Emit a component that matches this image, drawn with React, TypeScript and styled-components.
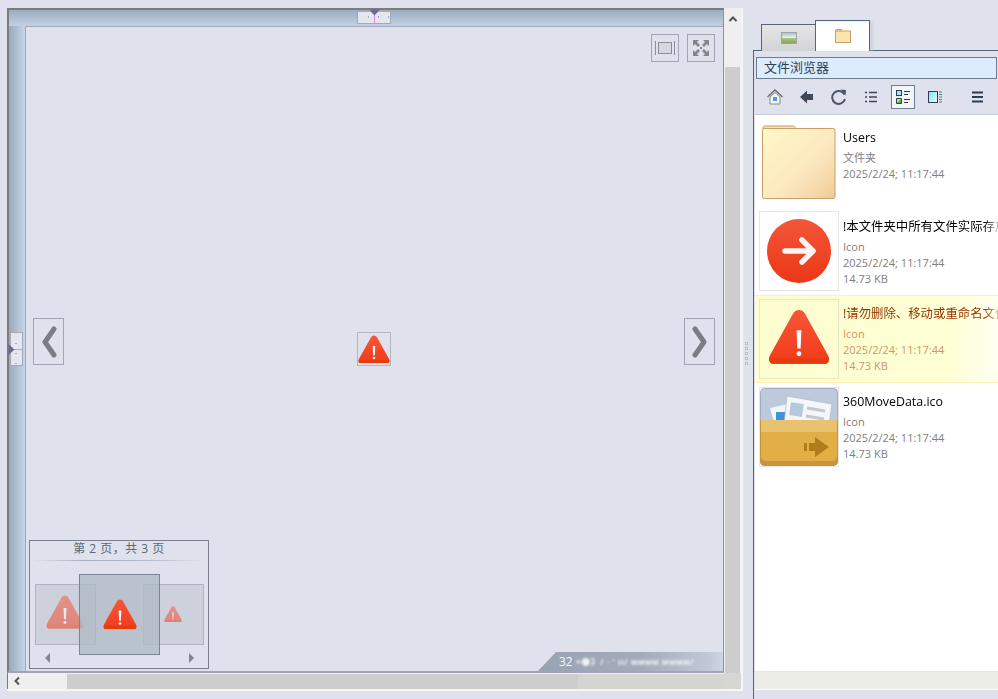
import * as React from 'react';
import styled, { createGlobalStyle } from 'styled-components';

const GlobalStyle = createGlobalStyle`
  html, body {
    margin: 0;
    padding: 0;
    height: 100%;
    background: #dfe2ec;
    overflow: hidden;
  }
  body {
    font-family: "Open Sans", "Noto Sans CJK SC", sans-serif;
    font-size: 12px;
  }
`;

const Page = styled.div`
  width: 998px;
  height: 699px;
  display: flex;
  padding: 8px 0 0 7px;
  box-sizing: border-box;
  overflow: hidden;
`;

const ViewerWindow = styled.div`
  width: 736px;
  height: 683px;
  display: grid;
  grid-template-columns: 1fr 17px;
  grid-template-rows: 1fr 16px;
  flex: none;
  border-right: 2px solid #f6f6f8;
  border-bottom: 2px solid #f6f6f8;
  box-sizing: border-box;
`;

const ViewerFrame = styled.div`
  position: relative;
  border-top: 2px solid #7c7c7c;
  border-left: 2px solid #7c7c7c;
  border-right: 1px solid #8a90a2;
  border-bottom: 2px solid #a0a4b4;
  padding: 16px 0 0 16px;
  background: linear-gradient(180deg, #9dabbf, #c2d0e2 16px, transparent 16px),
    linear-gradient(90deg, #9aa9bd, #c6d6e8 16px, transparent 16px);
`;

const Canvas = styled.div`
  position: relative;
  height: 100%;
  box-sizing: border-box;
  border-top: 1px solid #a2a6ba;
  border-left: 1px solid #a2a6ba;
  background: #dfe2ec;
`;

const Splitter = styled.div<{ $vertical?: boolean }>`
  position: absolute;
  z-index: 1;
  background: #e4e8ee;
  border: 1px solid #a4a9b8;
  box-sizing: border-box;
  ${p =>
    p.$vertical
      ? 'left: 1px; top: 322px; width: 13px; height: 34px;'
      : 'left: 348px; top: 1px; width: 34px; height: 13px;'}
`;

const SplitterMark = styled.svg`
  position: absolute;
  left: 0;
  top: 0;
  overflow: visible;
`;

const CornerButton = styled.div<{ $right: number }>`
  position: absolute;
  top: 7px;
  right: ${p => p.$right}px;
  width: 28px;
  height: 28px;
  box-sizing: border-box;
  border: 1px solid #a0a4b4;
  display: flex;
  align-items: center;
  justify-content: center;
`;

const NavButton = styled.div<{ $side: 'left' | 'right' }>`
  position: absolute;
  top: 291px;
  ${p => (p.$side === 'left' ? 'left: 7px;' : 'right: 8px;')}
  width: 31px;
  height: 47px;
  box-sizing: border-box;
  border: 1px solid #a0a4b4;
  display: flex;
  align-items: center;
  justify-content: center;
`;

const CenterImage = styled.div`
  position: absolute;
  left: 331px;
  top: 305px;
  width: 32px;
  height: 32px;
  border: 1px solid #b2b5c2;
  display: flex;
  align-items: center;
  justify-content: center;
`;

const Navigator = styled.div`
  position: absolute;
  left: 3px;
  bottom: 2px;
  width: 178px;
  height: 127px;
  border: 1px solid #78808e;
`;

const NavTitle = styled.div`
  height: 20px;
  box-sizing: border-box;
  margin: 0 4px;
  text-align: center;
  line-height: 16px;
  font-size: 12px;
  letter-spacing: 0.5px;
  color: #5a6878;
  border-bottom: 1px solid;
  border-image: linear-gradient(90deg, transparent, #a9adbd 30%, #b8bccb 70%, transparent) 1;
`;

const NavStage = styled.div`
  position: relative;
  height: 107px;
`;

const SidePage = styled.div<{ $side: 'left' | 'right' }>`
  position: absolute;
  top: 23px;
  ${p => (p.$side === 'left' ? 'left: 5px;' : 'right: 4px;')}
  width: 61px;
  height: 61px;
  background: #cdd1dc;
  border: 1px solid #afb4c2;
  box-sizing: border-box;
`;

const SideIcon = styled.div<{ $x: number; $y: number }>`
  position: absolute;
  left: ${p => p.$x}px;
  top: ${p => p.$y}px;
  opacity: 0.5;
  line-height: 0;
`;

const CurrentPage = styled.div`
  position: absolute;
  left: 49px;
  top: 13px;
  width: 81px;
  height: 81px;
  background: rgba(176, 184, 197, 0.78);
  border: 1px solid #7c8594;
  box-sizing: border-box;
  display: flex;
  align-items: center;
  justify-content: center;
`;

const NavArrow = styled.div<{ $side: 'left' | 'right' }>`
  position: absolute;
  top: 92px;
  ${p =>
    p.$side === 'left'
      ? 'left: 15px; border-right: 5px solid #7a8798;'
      : 'right: 14px; border-left: 5px solid #7a8798;'}
  border-top: 5px solid transparent;
  border-bottom: 5px solid transparent;
`;

const PageBadge = styled.div`
  position: absolute;
  right: 0;
  bottom: 0;
  width: 185px;
  height: 19px;
  background: linear-gradient(90deg, #9aa3b3, #a3abbb 55%, #c0c7d6 92%, #cfd5e2);
  clip-path: polygon(18px 0, 100% 0, 100% 100%, 0 100%);
  color: #f4f6fa;
  display: flex;
  align-items: center;
  padding-left: 21px;
  box-sizing: border-box;
  gap: 3px;
  font-size: 12px;
`;

const BlurredText = styled.span`
  filter: blur(0.8px);
  color: #f0f2f7;
  font-size: 9px;
  font-weight: 700;
  white-space: nowrap;
  letter-spacing: 0.4px;
`;

const VScroll = styled.div`
  background: #efefef;
  display: flex;
  flex-direction: column;
  align-items: center;
`;

const HScroll = styled.div`
  background: #efefef;
  display: flex;
  align-items: center;
  border-left: 1px solid #7c7c7c;
  padding-left: 1px;
`;

const ScrollBtn = styled.div<{ $top?: number }>`
  width: 16px;
  height: 16px;
  margin-top: ${p => p.$top ?? 0}px;
  flex: none;
  display: flex;
  align-items: center;
  justify-content: center;
`;

const VThumb = styled.div`
  width: 15px;
  margin-top: 40px;
  flex: 1;
  background: #cdcdcd;
`;

const HThumb = styled.div`
  margin-left: 42px;
  height: 15px;
  flex: 1;
  background: linear-gradient(90deg, #cdcdcd 77.8%, #d4d4d0 77.8%);
`;

const Corner = styled.div`
  background: #d6d6d2;
`;

const Side = styled.div`
  margin-left: 10px;
  flex: 1;
  display: flex;
  flex-direction: column;
  min-width: 0;
  margin-top: 12px;
`;

const TabRow = styled.div`
  height: 31px;
  display: flex;
  align-items: flex-end;
  padding-left: 8px;
  position: relative;
  z-index: 1;
  margin-bottom: -1px;
`;

const Tab = styled.div<{ $active?: boolean }>`
  width: ${p => (p.$active ? 55 : 54)}px;
  height: ${p => (p.$active ? 31 : 27)}px;
  box-sizing: border-box;
  border: 1px solid #566479;
  border-bottom: none;
  display: flex;
  align-items: center;
  justify-content: center;
  ${p =>
    p.$active
      ? 'background: linear-gradient(180deg, #e6f6fd, #fff 3px); box-shadow: 4px 0 3px -1px #cfd2dc;'
      : 'background: linear-gradient(180deg, #e6e6e8, #d2d3d6); border-right: none;'}
`;

const Panel = styled.div`
  flex: 1;
  display: flex;
  flex-direction: column;
  border-top: 1px solid #566479;
  border-left: 1px solid #566479;
  padding: 6px 1px 0 2px;
  min-height: 0;
`;

const TitleBar = styled.div`
  height: 22px;
  box-sizing: border-box;
  background: #dcecfd;
  border: 1px solid #6d7d90;
  color: #2e4258;
  font-size: 13px;
  line-height: 19px;
  padding-left: 7px;
`;

const Toolbar = styled.div`
  height: 35px;
  display: flex;
  align-items: center;
  padding-left: 7px;
`;

const ToolButton = styled.div<{ $active?: boolean; $gap?: number }>`
  width: 24px;
  height: 24px;
  margin-right: ${p => p.$gap ?? 8}px;
  flex: none;
  display: flex;
  align-items: center;
  justify-content: center;
  box-sizing: border-box;
  ${p => p.$active && 'background: #f4f5f8; border: 1px solid #6d7d90;'}
`;

const FileList = styled.div`
  height: 558px;
  flex: none;
  box-sizing: border-box;
  background: #fff;
  border-top: 1px solid #c8cbd8;
  border-bottom: 1px solid #e6e6e8;
  margin: 0 -1px 0 -1px;
  padding-top: 7px;
  overflow: hidden;
`;

const StatusStrip = styled.div`
  height: 17px;
  flex: none;
  margin: 0 -1px;
  background: #edede7;
  border-bottom: 1px solid #fbfbfb;
`;

const Item = styled.div<{ $selected?: boolean; $height: number; $pad: number }>`
  height: ${p => p.$height}px;
  display: flex;
  box-sizing: border-box;
  padding: ${p => p.$pad}px 0 0 4px;
  ${p =>
    p.$selected &&
    'background: linear-gradient(90deg, #fdfdcf, #feffd4 80%, #fffff0); border-top: 1px solid #fdf0bb; border-bottom: 1px solid #fdf0bb;'}
`;

const Thumb = styled.div<{ $bare?: boolean; $selected?: boolean }>`
  width: 80px;
  height: 80px;
  flex: none;
  box-sizing: border-box;
  border: 1px solid ${p => (p.$bare ? 'transparent' : p.$selected ? '#e8e8c0' : '#e6e6e6')};
  padding-bottom: ${p => (p.$selected ? 4 : 0)}px;
  display: flex;
  align-items: center;
  justify-content: center;
`;

const Meta = styled.div<{ $top: number }>`
  margin-left: 4px;
  min-width: 0;
  flex: 1;
  overflow: hidden;
  padding-top: ${p => p.$top}px;
`;

const Name = styled.div<{ $selected?: boolean }>`
  height: 20px;
  line-height: 16px;
  white-space: nowrap;
  color: ${p => (p.$selected ? '#993300' : '#000')};
  font-size: 12.4px;
  mask-image: linear-gradient(90deg, #000 calc(100% - 14px), rgba(0, 0, 0, 0.3));
`;

const Line = styled.div<{ $selected?: boolean }>`
  height: 16px;
  line-height: 16px;
  white-space: nowrap;
  color: ${p => (p.$selected ? '#d4946a' : '#808080')};
  font-size: 11px;
`;

const Grip = styled.div`
  position: absolute;
  left: 745px;
  top: 342px;
  display: flex;
  flex-direction: column;
  gap: 2px;
`;

const GripDot = styled.span`
  width: 3px;
  height: 3px;
  background: #f0f1f5;
  border: 1px solid #bcc0cc;
  box-sizing: border-box;
`;

const Warning = ({ size, id }: { size: number; id: string }) => (
  <svg width={size} height={size * 0.9} viewBox="0 0 64 58" style={{ display: 'block' }}>
    <defs>
      <linearGradient id={id} x1="0" y1="0" x2="0" y2="1">
        <stop offset="0" stopColor="#f8553a" />
        <stop offset="1" stopColor="#f03c18" />
      </linearGradient>
    </defs>
    <path
      d="M32 1c2.800 0 4.800 1.500 6.300 4l24.100 43.500c1.800 3.300.3 8.500-3.500 8.500H5.100c-3.800 0-5.300-5.200-3.500-8.500L25.700 5C27.200 2.500 29.200 1 32 1z"
      fill={`url(#${id})`}
    />
    <path d="M1.200 51h61.600c1 3-.9 6-3.900 6H5.100C2.100 57 .2 54 1.200 51z" fill="#e8390f" />
    <path d="M29.500 22h5l-.8 19h-3.400z" fill="#fff" />
    <circle cx="32" cy="46.500" r="2.500" fill="#fff" />
  </svg>
);

const FolderLarge = () => (
  <svg width="74" height="74" viewBox="0 0 74 74">
    <defs>
      <linearGradient id="folderFill" x1="0" y1="0" x2="1" y2="1">
        <stop offset="0" stopColor="#fff9c8" />
        <stop offset="0.6" stopColor="#fbe7bf" />
        <stop offset="1" stopColor="#efcb96" />
      </linearGradient>
    </defs>
    <path d="M1 4V2.500C1 1.500 1.500 1 2.500 1h29C33 1 33.500 2 33.500 4z" fill="#f5e3b4" stroke="#c89d68" />
    <rect x="0.500" y="3.500" width="72.500" height="70" rx="2" fill="url(#folderFill)" stroke="#c89d68" />
  </svg>
);

const ArrowIcon = () => (
  <svg width="64" height="64" viewBox="0 0 64 64">
    <defs>
      <linearGradient id="arrowFill" x1="0" y1="0" x2="0" y2="1">
        <stop offset="0" stopColor="#f4563a" />
        <stop offset="1" stopColor="#ea3716" />
      </linearGradient>
    </defs>
    <circle cx="32" cy="32" r="32" fill="url(#arrowFill)" />
    <path d="M18 32h28M35 21l11 11-11 11" fill="none" stroke="#fff4f0" strokeWidth="5.500" strokeLinecap="round" strokeLinejoin="round" />
  </svg>
);

const MoveDataIcon = () => (
  <svg width="78" height="78" viewBox="0 0 78 78">
    <rect x="0.500" y="0.500" width="77" height="77" rx="4" fill="#bccadb" stroke="#9fadbf" />
    <path d="M10 20l18-4 6 18H14z" fill="#f2f5f9" />
    <rect x="16" y="24" width="11" height="12" fill="#3d93dc" />
    <path d="M27 8l45 8-3 20H24z" fill="#f4f6f9" stroke="#aab6c6" strokeWidth="0.700" />
    <rect x="30" y="15" width="13" height="13" fill="#b6c8dc" transform="rotate(8 36 21)" />
    <path d="M47 20l18 3M46 28l18 3" stroke="#c0c8d2" strokeWidth="3" />
    <path d="M0 32h78v41a5 5 0 0 1-5 5H5a5 5 0 0 1-5-5z" fill="#c9953c" />
    <path d="M1 32h76v36a5 5 0 0 1-5 5H6a5 5 0 0 1-5-5z" fill="#e2ae46" />
    <rect x="1" y="32" width="76" height="12" fill="#e8c26f" />
    <path d="M44 55h3v8h-3zM49 55h6v-6l14 10-14 10v-6h-6z" fill="#b07d1c" />
  </svg>
);

const ImageTabIcon = () => (
  <svg width="16" height="12" viewBox="0 0 16 12">
    <defs>
      <linearGradient id="tabSky" x1="0" y1="0" x2="0" y2="1">
        <stop offset="0" stopColor="#b6bfc8" />
        <stop offset="1" stopColor="#eef2ee" />
      </linearGradient>
      <linearGradient id="tabGrass" x1="0" y1="0" x2="0" y2="1">
        <stop offset="0" stopColor="#adc688" />
        <stop offset="1" stopColor="#86a65a" />
      </linearGradient>
    </defs>
    <rect x="0.500" y="0.500" width="15" height="11" fill="#eef2f0" stroke="#9aa3a6" />
    <rect x="1" y="1" width="14" height="5" fill="url(#tabSky)" />
    <rect x="1" y="6" width="14" height="5" fill="url(#tabGrass)" />
  </svg>
);

const FolderTabIcon = () => (
  <svg width="16" height="14" viewBox="0 0 16 14">
    <path d="M.5 2.500V1.500c0-.5.300-1 1-1h5l1 2z" fill="#f3dfae" stroke="#c89d68" />
    <rect x="0.500" y="2" width="15" height="11.500" fill="#fae5ad" stroke="#c99f6b" />
  </svg>
);

const Sprite = ({ d }: { d: React.ReactNode }) => (
  <svg width="18" height="18" viewBox="0 0 18 18">
    {d}
  </svg>
);

const FILES = [
  { name: 'Users', height: 89, pad: 0, metaTop: 8, type: '文件夹', size: '', icon: <FolderLarge />, bare: true },
  {
    name: '!本文件夹中所有文件实际存放在其他位置',
    height: 84,
    pad: 0,
    metaTop: 8,
    type: 'Icon',
    size: '14.73 KB',
    icon: <ArrowIcon />,
  },
  {
    name: '!请勿删除、移动或重命名文件夹中的文件',
    height: 88,
    pad: 3,
    metaTop: 7,
    type: 'Icon',
    size: '14.73 KB',
    selected: true,
    icon: <Warning size={62} id="warnRow" />,
  },
  { name: '360MoveData.ico', height: 84, pad: 4, metaTop: 7, type: 'Icon', size: '14.73 KB', icon: <MoveDataIcon /> },
];

export default function App() {
  return (
    <Page>
      <GlobalStyle />
      <ViewerWindow>
        <ViewerFrame>
          <Splitter>
            <SplitterMark width="32" height="11">
              <path d="M10.500 4v2M20.500 4v2M30.500 4v2" stroke="#8cb0e8" />
              <path d="M16.500 0v11" stroke="#ec80ec" />
              <path d="M11 -2.500h11l-5.500 6z" fill="#6a6a90" />
            </SplitterMark>
          </Splitter>
          <Splitter $vertical>
            <SplitterMark width="11" height="32">
              <path d="M4 10.500h2M4 20.500h2M4 30.500h2" stroke="#8cb0e8" />
              <path d="M0 16.500h11" stroke="#ec80ec" />
              <path d="M-2.500 11v11l6-5.500z" fill="#6a6a90" />
            </SplitterMark>
          </Splitter>
          <Canvas>
            <CornerButton $right={44}>
              <svg width="20" height="14" viewBox="0 0 20 14">
                <rect x="3.500" y="1.500" width="13" height="11" fill="#d4d7e0" stroke="#8a8d99" />
                <path d="M.5 0v14M19.500 0v14" stroke="#8a8d99" />
              </svg>
            </CornerButton>
            <CornerButton $right={8}>
              <svg width="18" height="18" viewBox="0 0 18 18" fill="#85868c">
                <path d="M1 1h6L5 3l3 3-2 2-3-3-2 2zM17 1h-6l2 2-3 3 2 2 3-3 2 2zM1 17h6l-2-2 3-3-2-2-3 3-2-2zM17 17h-6l2-2-3-3 2-2 3 3 2-2z" />
                <rect x="8" y="8" width="2" height="2" />
              </svg>
            </CornerButton>
            <NavButton $side="left">
              <svg width="16" height="34" viewBox="0 0 16 34">
                <path d="M13 4L4 17l9 13" fill="none" stroke="#7a7d84" strokeWidth="5" strokeLinecap="round" strokeLinejoin="round" />
              </svg>
            </NavButton>
            <NavButton $side="right">
              <svg width="16" height="34" viewBox="0 0 16 34">
                <path d="M3 4l9 13-9 13" fill="none" stroke="#7a7d84" strokeWidth="5" strokeLinecap="round" strokeLinejoin="round" />
              </svg>
            </NavButton>
            <CenterImage>
              <Warning size={32} id="warnCenter" />
            </CenterImage>
            <Navigator>
              <NavTitle>第 2 页，共 3 页</NavTitle>
              <NavStage>
                <SidePage $side="left">
                  <SideIcon $x={10} $y={10}><Warning size={38} id="warnPrev" /></SideIcon>
                </SidePage>
                <SidePage $side="right">
                  <SideIcon $x={20} $y={21}><Warning size={18} id="warnNext" /></SideIcon>
                </SidePage>
                <CurrentPage>
                  <Warning size={34} id="warnCurrent" />
                </CurrentPage>
                <NavArrow $side="left" />
                <NavArrow $side="right" />
              </NavStage>
            </Navigator>
            <PageBadge>
              32
              <BlurredText>×●》/ ·  ’ ıı/ ᴍᴍᴍᴍ ᴍᴍᴍᴍ/</BlurredText>
            </PageBadge>
          </Canvas>
        </ViewerFrame>
        <VScroll>
          <ScrollBtn $top={3}>
            <svg width="10" height="8" viewBox="0 0 10 8">
              <path d="M1.500 6L5 2.500 8.500 6" fill="none" stroke="#555" strokeWidth="2" />
            </svg>
          </ScrollBtn>
          <VThumb />
        </VScroll>
        <HScroll>
          <ScrollBtn>
            <svg width="8" height="10" viewBox="0 0 8 10">
              <path d="M6 1.500L2.500 5 6 8.500" fill="none" stroke="#555" strokeWidth="2" />
            </svg>
          </ScrollBtn>
          <HThumb />
        </HScroll>
        <Corner />
      </ViewerWindow>
      <Grip>
        {[0, 1, 2, 3, 4].map(i => (
          <GripDot key={i} />
        ))}
      </Grip>
      <Side>
        <TabRow>
          <Tab>
            <ImageTabIcon />
          </Tab>
          <Tab $active>
            <FolderTabIcon />
          </Tab>
        </TabRow>
        <Panel>
          <TitleBar>文件浏览器</TitleBar>
          <Toolbar>
            <ToolButton>
              <Sprite
                d={
                  <>
                    <path d="M1.500 9L9 2l7.500 7" fill="none" stroke="#6d6d6d" strokeWidth="1.500" />
                    <path d="M4 9v7h10V9L9 4.500z" fill="#f6f6f6" stroke="#8a8a8a" />
                    <rect x="7" y="9" width="4" height="4" fill="#4a9de0" />
                  </>
                }
              />
            </ToolButton>
            <ToolButton>
              <Sprite d={<path d="M2 9l7-6.500V6h6v6H9v3.500z" fill="#3d4859" />} />
            </ToolButton>
            <ToolButton>
              <Sprite
                d={
                  <>
                    <path d="M14.500 6.500A6.500 6.500 0 1 0 15 11" fill="none" stroke="#4a5568" strokeWidth="2" />
                    <path d="M11 1.500l5 .5-.5 5.500z" fill="#4a5568" />
                  </>
                }
              />
            </ToolButton>
            <ToolButton>
              <Sprite
                d={
                  <path
                    d="M3 4.500h2M7 4.500h8M3 9h2M7 9h8M3 13.500h2M7 13.500h8"
                    stroke="#3d4859"
                    strokeWidth="1.300"
                  />
                }
              />
            </ToolButton>
            <ToolButton $active>
              <Sprite
                d={
                  <>
                    <rect x="2.500" y="2.500" width="5" height="5" fill="#9fe3f5" stroke="#2e3d50" />
                    <path d="M2.500 10.500h5v5h-5z" fill="#e8e83a" stroke="#2e3d50" />
                    <path d="M3 15l4-4v4z" fill="#4db848" />
                    <path d="M10 3.500h6M10 6.500h4M10 11.500h6M10 14.500h4" stroke="#2e3d50" />
                  </>
                }
              />
            </ToolButton>
            <ToolButton $gap={19}>
              <Sprite
                d={
                  <>
                    <defs>
                      <linearGradient id="previewFill" x1="0" y1="0" x2="1" y2="1">
                        <stop offset="0" stopColor="#7fe6f0" />
                        <stop offset="1" stopColor="#e8fbfb" />
                      </linearGradient>
                    </defs>
                    <rect x="2.500" y="3.500" width="9" height="11" fill="url(#previewFill)" stroke="#2e3d50" />
                    <path d="M13 4h3M13 6.500h3M13 9h3M13 11.500h3M13 14h3" stroke="#6a7585" />
                  </>
                }
              />
            </ToolButton>
            <ToolButton $gap={0}>
              <Sprite d={<path d="M3 4.500h11M3 9h11M3 13.500h11" stroke="#2e3d50" strokeWidth="2" />} />
            </ToolButton>
          </Toolbar>
          <FileList>
            {FILES.map(file => (
              <Item key={file.name} $selected={file.selected} $height={file.height} $pad={file.pad}>
                <Thumb $bare={file.bare} $selected={file.selected}>
                  {file.icon}
                </Thumb>
                <Meta $top={file.metaTop}>
                  <Name $selected={file.selected}>{file.name}</Name>
                  <Line $selected={file.selected}>{file.type}</Line>
                  <Line $selected={file.selected}>2025/2/24; 11:17:44</Line>
                  {file.size && <Line $selected={file.selected}>{file.size}</Line>}
                </Meta>
              </Item>
            ))}
          </FileList>
          <StatusStrip />
        </Panel>
      </Side>
    </Page>
  );
}
